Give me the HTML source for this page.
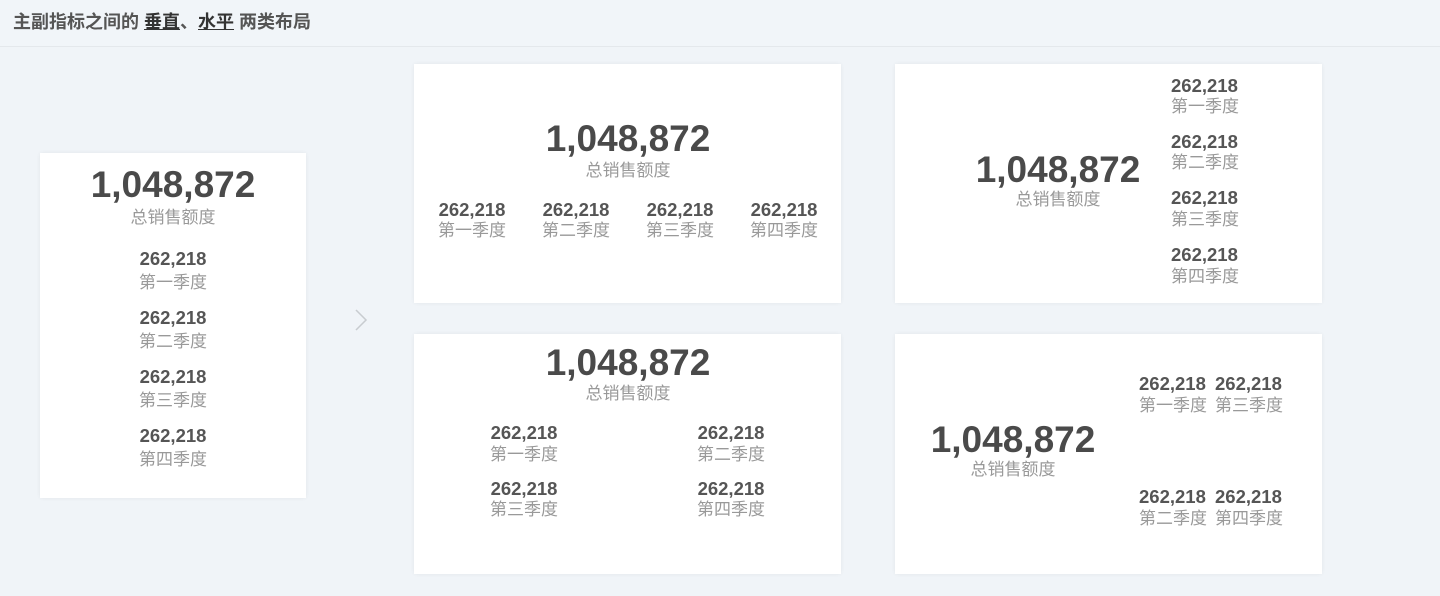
<!DOCTYPE html>
<html><head><meta charset="utf-8"><style>
*{margin:0;padding:0;box-sizing:border-box}
body{width:1440px;height:596px;background:#f0f4f8;position:relative;overflow:hidden;font-family:"Liberation Sans","Noto Sans CJK SC",sans-serif}
.hd{position:absolute;left:0;top:0;width:1440px;height:47px;border-bottom:1px solid #e4e8ec;background:#f1f5f9}
.hd span.t{position:absolute;left:13px;top:8px;font-size:18px;font-weight:bold;color:#555}
.hd u{color:#333;text-decoration:underline}
.card{position:absolute;background:#fff;box-shadow:0 0 4px rgba(0,0,0,.06)}
.c{position:absolute;transform:translate(-50%,-50%);white-space:nowrap;text-align:center}
.l{position:absolute;transform:translateY(-50%);white-space:nowrap}
.big{font-size:37px;font-weight:bold;color:#4a4a4a;line-height:40px}
.num{font-size:18.5px;font-weight:bold;color:#555;line-height:20px}
.lab{font-size:17px;color:#999;line-height:20px}
.blab{font-size:17px;color:#999;line-height:20px}
</style></head><body>
<div class="hd"><span class="t">主副指标之间的 <u>垂直</u>、<u>水平</u> 两类布局</span></div>

<div class="card" style="left:40px;top:153px;width:266px;height:345px"></div>
<div class="card" style="left:414px;top:64px;width:427px;height:239px"></div>
<div class="card" style="left:895px;top:64px;width:427px;height:239px"></div>
<div class="card" style="left:414px;top:334px;width:427px;height:240px"></div>
<div class="card" style="left:895px;top:334px;width:427px;height:240px"></div>

<svg style="position:absolute;left:354px;top:309px" width="14" height="22"><path d="M2 1 L12 11 L2 21" fill="none" stroke="#c8ccd0" stroke-width="1.5"/></svg>

<!-- card1 -->
<div class="c big" style="left:173px;top:185px">1,048,872</div>
<div class="c blab" style="left:173px;top:218px">总销售额度</div>
<div class="c num" style="left:173px;top:259px">262,218</div><div class="c lab" style="left:173px;top:283px">第一季度</div>
<div class="c num" style="left:173px;top:318px">262,218</div><div class="c lab" style="left:173px;top:342px">第二季度</div>
<div class="c num" style="left:173px;top:377px">262,218</div><div class="c lab" style="left:173px;top:401px">第三季度</div>
<div class="c num" style="left:173px;top:436px">262,218</div><div class="c lab" style="left:173px;top:460px">第四季度</div>

<!-- card2 -->
<div class="c big" style="left:628px;top:139px">1,048,872</div>
<div class="c blab" style="left:628px;top:171px">总销售额度</div>
<div class="c num" style="left:472px;top:210px">262,218</div><div class="c lab" style="left:472px;top:231px">第一季度</div>
<div class="c num" style="left:576px;top:210px">262,218</div><div class="c lab" style="left:576px;top:231px">第二季度</div>
<div class="c num" style="left:680px;top:210px">262,218</div><div class="c lab" style="left:680px;top:231px">第三季度</div>
<div class="c num" style="left:784px;top:210px">262,218</div><div class="c lab" style="left:784px;top:231px">第四季度</div>

<!-- card3 -->
<div class="c big" style="left:1058px;top:170px">1,048,872</div>
<div class="c blab" style="left:1058px;top:200px">总销售额度</div>
<div class="l num" style="left:1171px;top:86px">262,218</div><div class="l lab" style="left:1171px;top:107px">第一季度</div>
<div class="l num" style="left:1171px;top:142px">262,218</div><div class="l lab" style="left:1171px;top:163px">第二季度</div>
<div class="l num" style="left:1171px;top:198px">262,218</div><div class="l lab" style="left:1171px;top:220px">第三季度</div>
<div class="l num" style="left:1171px;top:255px">262,218</div><div class="l lab" style="left:1171px;top:277px">第四季度</div>

<!-- card4 -->
<div class="c big" style="left:628px;top:363px">1,048,872</div>
<div class="c blab" style="left:628px;top:394px">总销售额度</div>
<div class="c num" style="left:524px;top:433px">262,218</div><div class="c lab" style="left:524px;top:455px">第一季度</div>
<div class="c num" style="left:731px;top:433px">262,218</div><div class="c lab" style="left:731px;top:455px">第二季度</div>
<div class="c num" style="left:524px;top:489px">262,218</div><div class="c lab" style="left:524px;top:510px">第三季度</div>
<div class="c num" style="left:731px;top:489px">262,218</div><div class="c lab" style="left:731px;top:510px">第四季度</div>

<!-- card5 -->
<div class="c big" style="left:1013px;top:440px">1,048,872</div>
<div class="c blab" style="left:1013px;top:470px">总销售额度</div>
<div class="l num" style="left:1139px;top:384px">262,218</div><div class="l lab" style="left:1139px;top:406px">第一季度</div>
<div class="l num" style="left:1215px;top:384px">262,218</div><div class="l lab" style="left:1215px;top:406px">第三季度</div>
<div class="l num" style="left:1139px;top:497px">262,218</div><div class="l lab" style="left:1139px;top:519px">第二季度</div>
<div class="l num" style="left:1215px;top:497px">262,218</div><div class="l lab" style="left:1215px;top:519px">第四季度</div>
</body></html>
